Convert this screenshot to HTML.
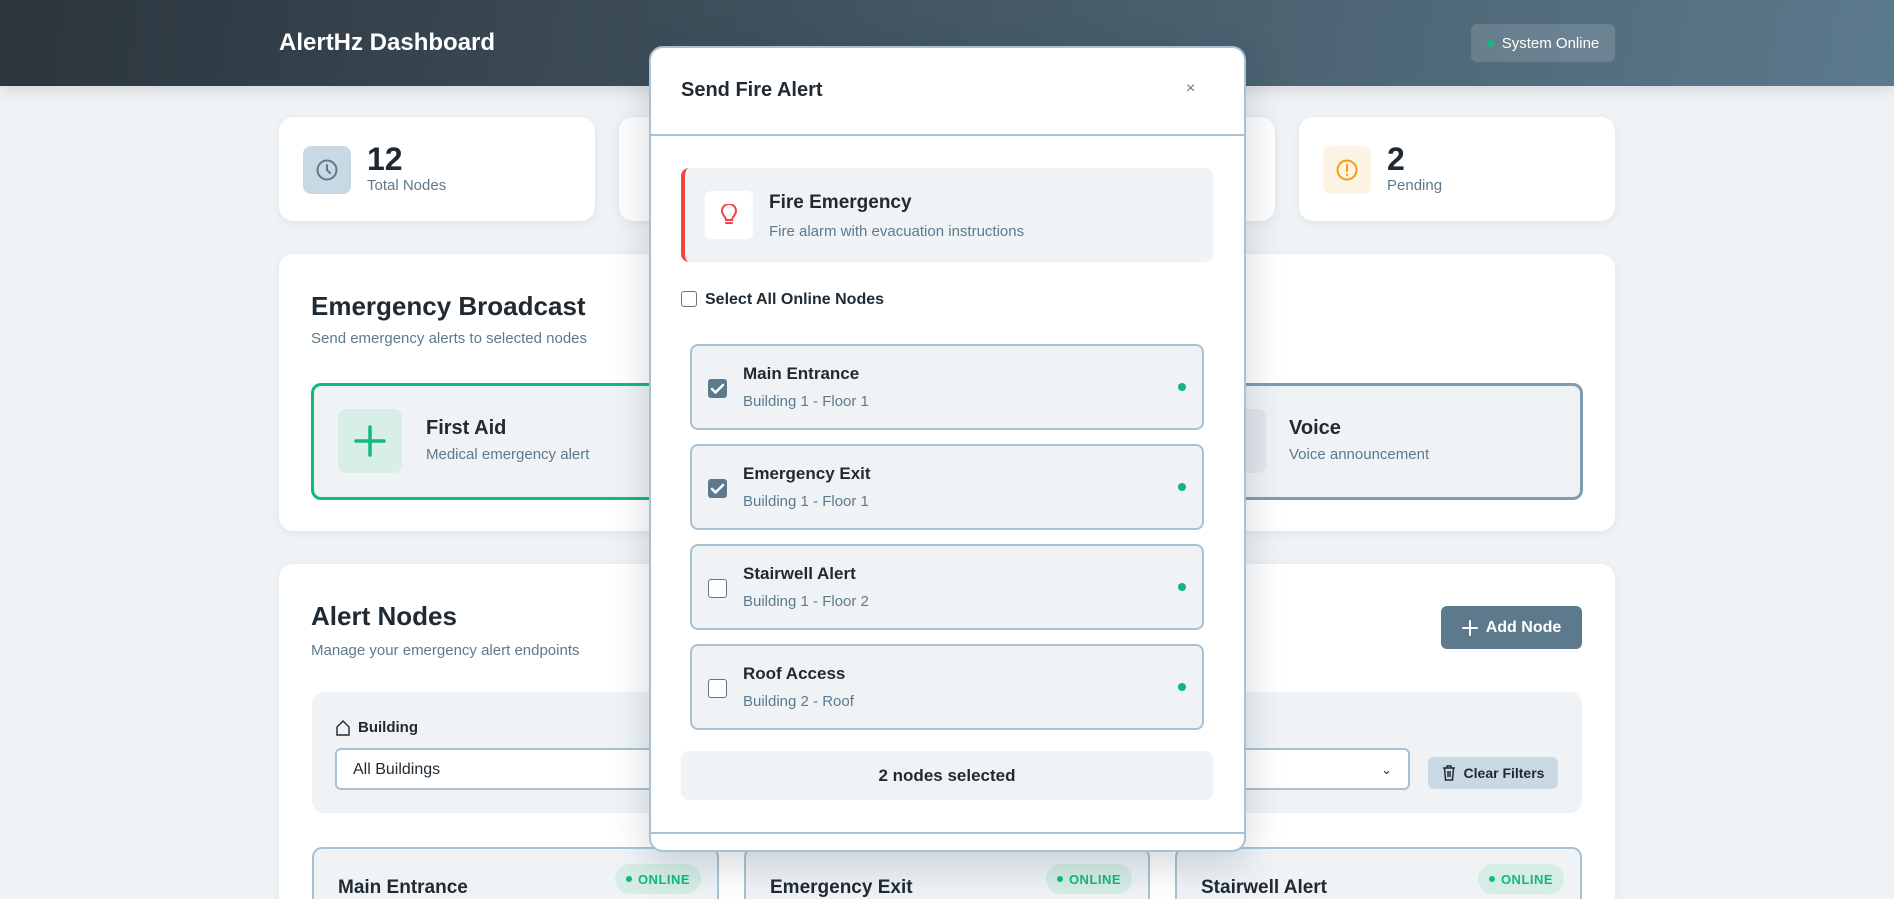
<!DOCTYPE html>
<html style="width:1894px;height:899px;overflow:hidden"><head><meta charset="utf-8"><style>
*{box-sizing:border-box;margin:0;padding:0}
body{width:1894px;height:899px;overflow:hidden;background:#eff3f6;font-family:"Liberation Sans",sans-serif;color:#1f2a33;position:relative}
.abs{position:absolute}
.hdr{left:0;top:0;width:1894px;height:86px;background:linear-gradient(100deg,#2b353d 0%,#3f505c 40%,#5b7a8c 100%);box-shadow:0 4px 14px rgba(0,0,0,.12)}
.card{background:#fff;border-radius:14px;box-shadow:0 2px 8px rgba(30,50,70,.08)}
.muted{color:#5d7a8c}
.stat .ib{position:absolute;left:24px;top:29px;width:48px;height:48px;border-radius:8px;display:flex;align-items:center;justify-content:center}
.stat .n{position:absolute;left:88px;top:24px;font-size:32px;font-weight:bold}
.stat .l{position:absolute;left:88px;top:60px;font-size:15px;color:#5d7a8c}
.atype{border-radius:10px;background:#eff3f6;height:117px;top:383px}
.node{border:2px solid #a9c2d3;border-radius:8px;background:#eff3f6;left:690px;width:514px;height:86px}
.node .cb{position:absolute;left:16px;top:33px;width:19px;height:19px;border-radius:3px}
.node .cb.on{background:#5d7a8c}
.node .cb.off{border:1.5px solid #6b7280;background:#fff}
.node .t{position:absolute;left:51px;top:18px;font-size:17px;font-weight:bold;color:#1f2a33}
.node .s{position:absolute;left:51px;top:47px;font-size:15px;color:#5d7a8c}
.node .d{position:absolute;right:16px;top:37px;width:8px;height:8px;border-radius:50%;background:#10b981}
.sel{height:42px;border:2px solid #a9c2d3;border-radius:6px;background:#fff;font-size:16px;padding:11px 16px}
.nc{top:847px;height:52px;border:2px solid #a9c2d3;border-bottom:none;border-radius:10px 10px 0 0;background:#eff3f6;overflow:hidden}
.nc .t{position:absolute;left:24px;top:28px;font-size:19px;font-weight:bold}
.badge{position:absolute;right:16px;top:15px;width:86px;height:30px;border-radius:15px;background:#d5ede5;color:#10b981;font-size:13px;font-weight:bold;letter-spacing:.5px;display:flex;align-items:center;justify-content:center;gap:6px}
.badge:before{content:"";width:6px;height:6px;border-radius:50%;background:#10b981}
</style></head><body>
<div class="abs hdr"></div>
<div class="abs" style="left:279px;top:29px;font-size:24px;font-weight:bold;color:#fff">AlertHz Dashboard</div>
<div class="abs" style="left:1471px;top:24px;width:144px;height:38px;border-radius:6px;background:rgba(255,255,255,.14);color:#fff;font-size:15px;display:flex;align-items:center;justify-content:center;gap:8px"><span style="width:7px;height:7px;border-radius:50%;background:#10b981;display:inline-block"></span>System Online</div>

<div class="abs card stat" style="left:279px;top:117px;width:316px;height:104px">
<div class="ib" style="background:#c9d9e4"><svg width="24" height="24" viewBox="0 0 24 24" fill="none" stroke="#5d7a8c" stroke-width="2" stroke-linecap="round"><circle cx="12" cy="12" r="9.5"/><path d="M12 7v5l3 3"/></svg></div>
<div class="n">12</div><div class="l">Total Nodes</div></div>
<div class="abs card" style="left:619px;top:117px;width:316px;height:104px"></div>
<div class="abs card" style="left:959px;top:117px;width:316px;height:104px"></div>
<div class="abs card stat" style="left:1299px;top:117px;width:316px;height:104px">
<div class="ib" style="background:#fef4e6"><svg width="24" height="24" viewBox="0 0 24 24" fill="none" stroke="#f59e0b" stroke-width="2" stroke-linecap="round"><circle cx="12" cy="12" r="9.5"/><path d="M12 7v6M12 16.5v.5"/></svg></div>
<div class="n">2</div><div class="l">Pending</div></div>

<div class="abs card" style="left:279px;top:254px;width:1336px;height:277px"></div>
<div class="abs" style="left:311px;top:291px;font-size:26px;font-weight:bold">Emergency Broadcast</div>
<div class="abs muted" style="left:311px;top:330px;font-size:15px">Send emergency alerts to selected nodes</div>
<div class="abs atype" style="left:311px;width:408px;border:3px solid #10b981"></div>
<div class="abs" style="left:338px;top:409px;width:64px;height:64px;border-radius:8px;background:#d7efe7;display:flex;align-items:center;justify-content:center"><svg width="34" height="34" viewBox="0 0 34 34" stroke="#10b981" stroke-width="3.5" stroke-linecap="round"><path d="M17 3v28M3 17h28"/></svg></div>
<div class="abs" style="left:426px;top:417px;font-size:20px;font-weight:bold">First Aid</div>
<div class="abs muted" style="left:426px;top:446px;font-size:15px">Medical emergency alert</div>
<div class="abs atype" style="left:1175px;width:408px;border:3px solid #7f9cb0"></div>
<div class="abs" style="left:1202px;top:409px;width:64px;height:64px;border-radius:8px;background:#e2e8ed"></div>
<div class="abs" style="left:1289px;top:417px;font-size:20px;font-weight:bold">Voice</div>
<div class="abs muted" style="left:1289px;top:446px;font-size:15px">Voice announcement</div>

<div class="abs" style="left:279px;top:564px;width:1336px;height:335px;background:#fff;border-radius:14px 14px 0 0;box-shadow:0 2px 8px rgba(30,50,70,.08)"></div>
<div class="abs" style="left:311px;top:601px;font-size:26px;font-weight:bold">Alert Nodes</div>
<div class="abs muted" style="left:311px;top:642px;font-size:15px">Manage your emergency alert endpoints</div>
<div class="abs" style="left:1441px;top:606px;width:141px;height:43px;border-radius:6px;background:#5d7a8c;color:#fff;font-size:16px;font-weight:bold;display:flex;align-items:center;justify-content:center;gap:8px"><svg width="16" height="16" viewBox="0 0 16 16" stroke="#fff" stroke-width="2" stroke-linecap="round"><path d="M8 1v14M1 8h14"/></svg>Add Node</div>
<div class="abs" style="left:312px;top:692px;width:1270px;height:121px;border-radius:12px;background:#eff3f6"></div>
<div class="abs" style="left:336px;top:719px;font-size:15px;font-weight:bold;display:flex;align-items:center;gap:8px"><svg width="14" height="16" viewBox="0 0 14 16" fill="none" stroke="#1f2a33" stroke-width="1.4"><path d="M1 7L7 1l6 6v8H1z"/></svg>Building</div>
<div class="abs sel" style="left:335px;top:748px;width:330px">All Buildings</div>
<div class="abs sel" style="left:1100px;top:748px;width:310px;text-align:right;font-size:13px;padding-top:12px">⌄</div>
<div class="abs" style="left:1428px;top:757px;width:130px;height:32px;border-radius:6px;background:#c9d9e4;font-size:14px;font-weight:bold;display:flex;align-items:center;justify-content:center;gap:8px"><svg width="14" height="16" viewBox="0 0 14 16" fill="none" stroke="#1f2a33" stroke-width="1.5"><path d="M1 3h12M5 3V1h4v2M2.5 3l1 12h7l1-12M6 6v6M8 6v6"/></svg>Clear Filters</div>
<div class="abs nc" style="left:312px;width:407px"><div class="t">Main Entrance</div><div class="badge">ONLINE</div></div>
<div class="abs nc" style="left:744px;width:406px"><div class="t">Emergency Exit</div><div class="badge">ONLINE</div></div>
<div class="abs nc" style="left:1175px;width:407px"><div class="t">Stairwell Alert</div><div class="badge">ONLINE</div></div>

<div class="abs" style="left:649px;top:46px;width:597px;height:806px;background:#fff;border:2px solid #a9c2d3;border-radius:14px;box-shadow:0 12px 40px rgba(30,50,70,.2)"></div>
<div class="abs" style="left:681px;top:79px;font-size:20px;font-weight:bold">Send Fire Alert</div>
<div class="abs muted" style="left:1186px;top:80px;font-size:16px">×</div>
<div class="abs" style="left:651px;top:134px;width:593px;height:2px;background:#a9c2d3"></div>
<div class="abs" style="left:681px;top:168px;width:532px;height:94px;border-radius:8px;background:#eff3f6;border-left:4px solid #ef4444"></div>
<div class="abs" style="left:705px;top:191px;width:48px;height:48px;border-radius:6px;background:#fff;display:flex;align-items:center;justify-content:center"><svg width="18" height="22" viewBox="0 0 18 22" fill="none" stroke="#ef4444" stroke-width="2" stroke-linecap="round"><path d="M6 19h6M6 16c0-3-4-5-4-9a7 7 0 0 1 14 0c0 4-4 6-4 9z"/></svg></div>
<div class="abs" style="left:769px;top:192px;font-size:19px;font-weight:bold">Fire Emergency</div>
<div class="abs muted" style="left:769px;top:223px;font-size:15px">Fire alarm with evacuation instructions</div>
<div class="abs" style="left:681px;top:291px;width:16px;height:16px;border:1.5px solid #6b7280;border-radius:3px;background:#fff"></div>
<div class="abs" style="left:705px;top:291px;font-size:16px;font-weight:bold">Select All Online Nodes</div>

<div class="abs node" style="top:344px"><div class="cb on"><svg width="19" height="19" viewBox="0 0 19 19" fill="none" stroke="#fff" stroke-width="2.5" stroke-linecap="round" stroke-linejoin="round"><path d="M4 10l3.5 3.5L15 6"/></svg></div><div class="t">Main Entrance</div><div class="s">Building 1 - Floor 1</div><div class="d"></div></div>
<div class="abs node" style="top:444px"><div class="cb on"><svg width="19" height="19" viewBox="0 0 19 19" fill="none" stroke="#fff" stroke-width="2.5" stroke-linecap="round" stroke-linejoin="round"><path d="M4 10l3.5 3.5L15 6"/></svg></div><div class="t">Emergency Exit</div><div class="s">Building 1 - Floor 1</div><div class="d"></div></div>
<div class="abs node" style="top:544px"><div class="cb off"></div><div class="t">Stairwell Alert</div><div class="s">Building 1 - Floor 2</div><div class="d"></div></div>
<div class="abs node" style="top:644px"><div class="cb off"></div><div class="t">Roof Access</div><div class="s">Building 2 - Roof</div><div class="d"></div></div>

<div class="abs" style="left:681px;top:751px;width:532px;height:49px;border-radius:8px;background:#eff3f6;font-size:17px;font-weight:bold;display:flex;align-items:center;justify-content:center">2 nodes selected</div>
<div class="abs" style="left:651px;top:832px;width:593px;height:2px;background:#a9c2d3"></div>
</body></html>
